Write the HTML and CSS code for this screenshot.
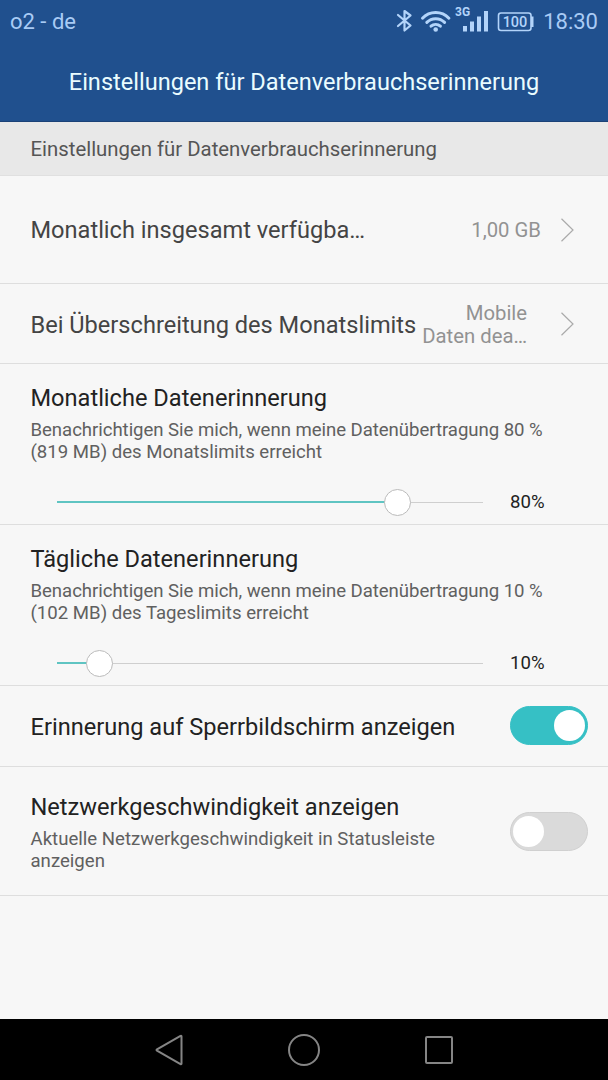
FILE: index.html
```html
<!DOCTYPE html>
<html lang="de">
<head>
	<meta charset="utf-8">
	<title>Einstellungen für Datenverbrauchserinnerung</title>
	<link rel="stylesheet" href="styles.css">
</head>
<body>
	<header class="header">
		<div class="statusbar">
			<span class="carrier">o2 - de</span>
			<svg class="icons" width="138" height="36" viewBox="0 0 138 36">
				<!-- bluetooth -->
				<path class="line" stroke-width="2.2" d="M2 15L14.500 25.500L8.500 30.500V11L14.500 15.500L2 26"/>
				<!-- wifi -->
				<path class="line" stroke-width="3" d="M26.500 18.200a18 18 0 0 1 26.400 0M30.800 22.400a12.400 12.400 0 0 1 17.800 0M35 26.200a7 7 0 0 1 9.400 0"/>
				<circle class="fill" cx="39.700" cy="29.500" r="2.300"/>
				<!-- signal -->
				<text class="net" x="59" y="16">3G</text>
				<path class="fill" d="M67 26h4v5.500h-4zM74 21.500h4v10h-4zM81 16.500h4v15h-4zM88 11h4v20.500h-4z"/>
				<!-- battery -->
				<rect class="line" x="102.500" y="13" width="32.500" height="17.500" rx="2.500" stroke-width="1.600"/>
				<path class="fill" d="M135 16.500h2.500v10.500H135z"/>
				<text class="level" x="119" y="27.300" text-anchor="middle">100</text>
			</svg>
			<span class="clock">18:30</span>
		</div>
		<h1 class="title">Einstellungen für Datenverbrauchserinnerung</h1>
	</header>
	<h2 class="section">Einstellungen für Datenverbrauchserinnerung</h2>

	<main class="list">
		<div class="row row-total">
			<span class="name">Monatlich insgesamt verfügba…</span>
			<span class="value">1,00 GB</span>
			<svg class="arrow" width="14" height="24" viewBox="0 0 14 24"><path d="M.5 .8L12 12L.5 23.200"/></svg>
		</div>
		<div class="row row-limit">
			<span class="name">Bei Überschreitung des Monatslimits</span>
			<span class="value value-two">Mobile<br>Daten dea…</span>
			<svg class="arrow" width="14" height="24" viewBox="0 0 14 24"><path d="M.5 .8L12 12L.5 23.200"/></svg>
		</div>
		<div class="row row-slider">
			<div class="label">Monatliche Datenerinnerung</div>
			<div class="hint"><span class="tight">Benachrichtigen Sie mich, wenn meine Datenübertragung 80 %</span><br>(819 MB) des Monatslimits erreicht</div>
			<div class="slider">
				<div class="track"><div class="done" style="width: 80%"></div><div class="knob"></div></div>
				<span class="percent">80%</span>
			</div>
		</div>
		<div class="row row-slider">
			<div class="label">Tägliche Datenerinnerung</div>
			<div class="hint"><span class="tight">Benachrichtigen Sie mich, wenn meine Datenübertragung 10 %</span><br>(102 MB) des Tageslimits erreicht</div>
			<div class="slider">
				<div class="track"><div class="done" style="width: 10%"></div><div class="knob"></div></div>
				<span class="percent">10%</span>
			</div>
		</div>
		<div class="row row-lock">
			<div class="label">Erinnerung auf Sperrbildschirm anzeigen</div>
			<div class="switch on"><div class="dot"></div></div>
		</div>
		<div class="row row-speed">
			<div>
				<div class="label">Netzwerkgeschwindigkeit anzeigen</div>
				<div class="hint">Aktuelle Netzwerkgeschwindigkeit in Statusleiste<br>anzeigen</div>
			</div>
			<div class="switch"><div class="dot"></div></div>
		</div>
	</main>

	<nav class="navbar">
		<svg width="32" height="34" viewBox="0 0 32 34"><path d="M28.500 3.500V30.500Q28.500 31.500 27.500 31L4 17.700Q3 17 4 16.300L27.500 3Q28.500 2.500 28.500 3.500z"/></svg>
		<svg width="34" height="34" viewBox="0 0 34 34"><circle cx="17" cy="17" r="15"/></svg>
		<svg width="32" height="32" viewBox="0 0 32 32"><rect x="3" y="3" width="26" height="26" rx="1"/></svg>
	</nav>
</body>
</html>
```
FILE: styles.css
```css
*{
	box-sizing: border-box;
}
body{
	margin: 0;
	height: 1080px;
	display: flex;
	flex-direction: column;
	background: #f7f7f7;
	font-family: Roboto, sans-serif;
	color: #222;
}
.header{
	height: 122px;
	background: #20508e;
	border-bottom: 1px solid #1b4277;
}
.statusbar{
	display: flex;
	height: 42px;
	padding: 0 10px;
	line-height: 43px;
	font-size: 22px;
	color: #a9cbf5;
}
.carrier{
	flex: 1;
}
.icons{
	margin-right: 9px;
}
.icons .line{
	fill: none;
	stroke: #b3d4fa;
	stroke-linecap: round;
	stroke-linejoin: round;
}
.icons .fill{
	fill: #b3d4fa;
}
.icons text{
	fill: #b3d4fa;
}
.net{
	font-size: 12px;
	font-weight: 700;
}
.level{
	font-size: 14.5px;
	font-weight: 500;
}
.title{
	margin: 0;
	line-height: 81px;
	text-align: center;
	font-size: 23.55px;
	font-weight: 400;
	color: #eafcff;
}
.section{
	margin: 0;
	height: 54px;
	padding-left: 30.5px;
	line-height: 54px;
	font-size: 20.35px;
	font-weight: 400;
	background: #e8e8e8;
	border-bottom: 1px solid #e0e0e0;
	color: #555;
}
.list{
	flex: 1;
}
.row{
	display: flex;
	align-items: center;
	padding: 0 20px 0 30.5px;
	border-bottom: 1px solid #dedede;
}
.row-total{
	height: 108px;
}
.row-limit{
	height: 80px;
}
.row-total, .row-limit{
	padding-right: 33px;
}
.name, .label{
	flex: 1;
	font-size: 23.6px;
	line-height: 28px;
	white-space: nowrap;
}
.name{
	color: #444;
}
.row-limit .name{
	padding-top: 2px;
}
.value{
	padding-top: 2px;
	font-size: 20.3px;
	line-height: 23px;
	text-align: right;
	color: #929292;
	margin-right: 20px;
}
.value-two{
	margin-right: 34px;
}
.arrow{
	fill: none;
	stroke: #aaa;
	stroke-width: 1.2;
}
.row-slider{
	display: block;
	height: 161px;
	padding-top: 20px;
}
.hint{
	margin-top: 7px;
	font-size: 18.6px;
	line-height: 22px;
	white-space: nowrap;
	color: #606060;
}
.tight{
	letter-spacing: -.05px;
}
.slider{
	display: flex;
	align-items: center;
	height: 28px;
	margin: 25px 0 0 26.5px;
}
.track{
	display: flex;
	align-items: center;
	width: 426px;
	height: 1px;
	background: #cfcfcf;
}
.done{
	height: 2px;
	background: #5fc4c2;
}
.knob{
	flex: none;
	width: 27px;
	height: 27px;
	margin-left: -13.5px;
	background: #fff;
	border: 1px solid #bbb;
	border-radius: 50%;
}
.percent{
	margin-left: 27px;
	font-size: 18.6px;
}
.row-lock{
	height: 81px;
}
.row-lock .label{
	padding-top: 2px;
}
.row-speed{
	height: 129px;
	padding-top: 2px;
	justify-content: space-between;
}
.row-speed .label{
	padding-top: 1px;
}
.switch{
	width: 78px;
	height: 39px;
	margin-bottom: 2px;
	padding: 3px 2px;
	background: #dadada;
	border: 1px solid #d0d0d0;
	border-radius: 20px;
}
.dot{
	width: 31px;
	height: 31px;
	background: #fff;
	border-radius: 50%;
}
.on{
	background: #36c0c5;
	border-color: #36c0c5;
}
.on .dot{
	margin-left: auto;
}
.navbar{
	display: flex;
	align-items: center;
	justify-content: space-between;
	height: 61px;
	padding: 0 153px;
	background: #000;
}
.navbar svg{
	fill: none;
	stroke: #858585;
	stroke-width: 2;
}
```
